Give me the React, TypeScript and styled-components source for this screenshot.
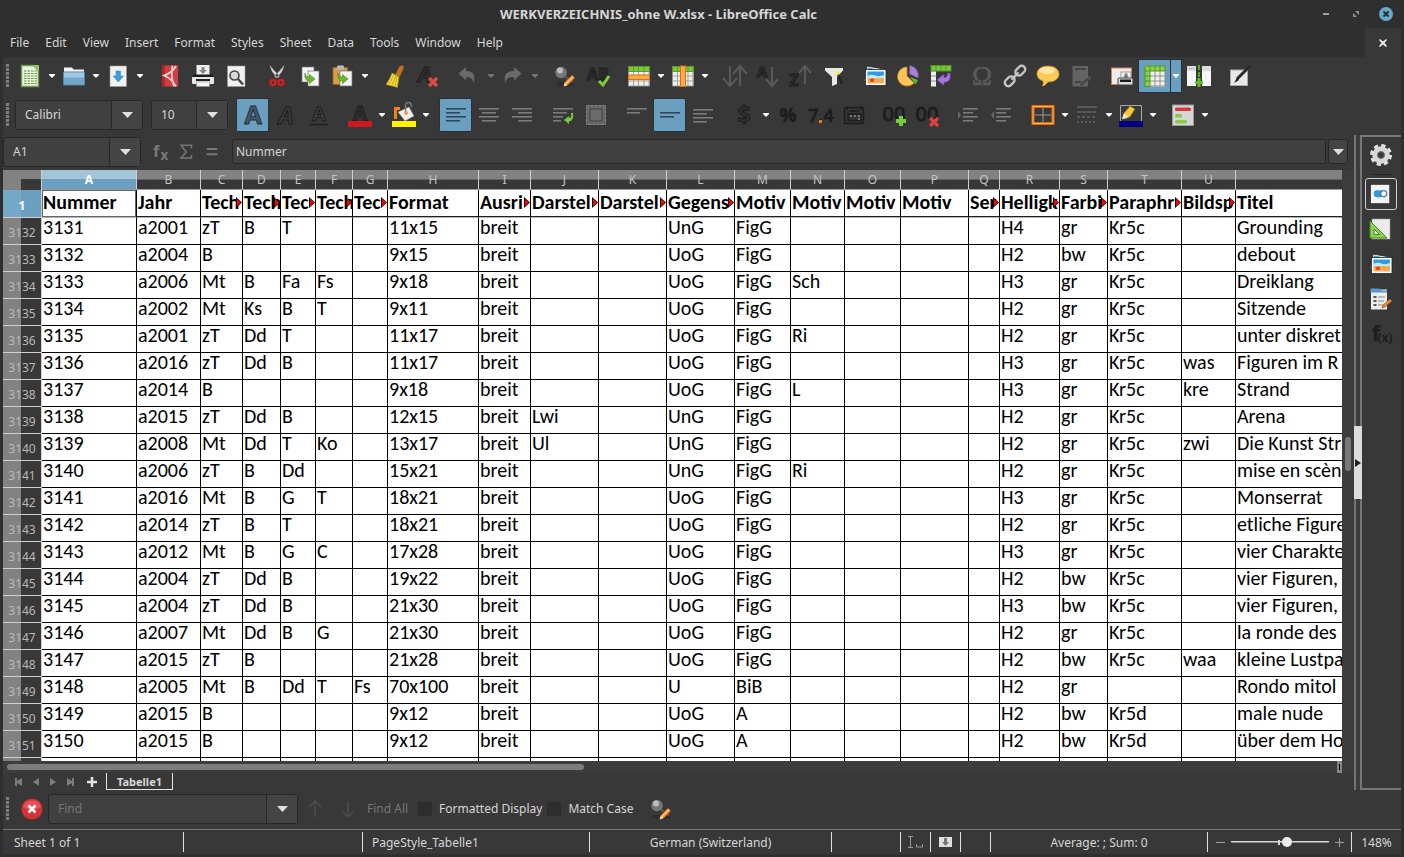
import React from 'react';
import styled, { createGlobalStyle, css } from 'styled-components';

const c = {
  frame: '#2f2f2f',
  panel: '#383838',
  field: '#404040',
  line: '#272727',
  text: '#d6d6d6',
  dim: '#767676',
  accent: '#6a9fc0',
};

const Global = createGlobalStyle`
  * { box-sizing: border-box; }
  body { margin: 0; background: ${c.frame}; overflow: hidden; }
  body, button, input { font-family: "Noto Sans", "Open Sans", sans-serif; font-size: 12px; color: ${c.text}; }
  button { border: 0; padding: 0; background: none; display: flex; align-items: center; justify-content: center; flex: none; }
  input { outline: none; }
  svg { display: block; flex: none; overflow: visible; }
`;

const Window = styled.div`
  display: flex;
  flex-direction: column;
  height: 100vh;
  padding: 0 3px 3px;
  background: ${c.frame};
`;

const TitleBar = styled.header`
  display: flex;
  align-items: center;
  height: 28px;
  flex: none;
`;
const Title = styled.h1`
  flex: 1;
  margin: 0;
  padding-left: 3px;
  font-size: 13px;
  font-weight: 700;
  line-height: 30px;
  text-align: center;
`;
const WindowButton = styled.button`
  width: 30px;
  height: 28px;
`;

const MenuBar = styled.nav`
  display: flex;
  align-items: center;
  height: 29px;
  flex: none;
  padding-left: 7px;
  gap: 16px;
`;
const MenuItem = styled.button`
  height: 29px;
`;
const CloseDocument = styled.button`
  width: 36px;
  height: 29px;
  margin-left: auto;
  background: ${c.panel};
`;

const Body = styled.div`
  display: flex;
  flex-direction: column;
  flex: 1;
  min-height: 0;
  background: ${c.panel};
`;

const Toolbar = styled.div`
  display: flex;
  align-items: center;
  height: 39px;
  flex: none;
  padding: 0 0 2px 3px;
`;
const Grip = styled.div`
  width: 3px;
  height: 23px;
  flex: none;
  background: repeating-linear-gradient(#7d7d7d 0 3px, transparent 3px 4px);
`;
const Gap = styled.div<{ $w?: number }>`
  width: ${p => p.$w ?? 8}px;
  flex: none;
`;
const ToolButton = styled.button<{ $on?: boolean }>`
  width: 33px;
  height: 34px;
  border-radius: 2px;
  border: 1px solid transparent;
  ${p => p.$on && css`background: ${c.accent}; border-color: #25323a;`}
`;
const ArrowButton = styled.button<{ $on?: boolean }>`
  width: 11px;
  height: 34px;
  ${p => p.$on && css`background: ${c.accent}; border: 1px solid #25323a; border-left: 0; border-radius: 0 2px 2px 0;`}
`;

const Combo = styled.div<{ $w: number }>`
  display: flex;
  width: ${p => p.$w}px;
  height: 30px;
  flex: none;
  background: ${c.field};
  border: 1px solid ${c.line};
  border-radius: 3px;
`;
const ComboInput = styled.input`
  flex: 1;
  min-width: 0;
  border: 0;
  background: none;
  padding: 0 0 0 9px;
  &::placeholder { color: ${c.dim}; opacity: 1; }
`;
const ComboArrow = styled.button`
  width: 31px;
  border-left: 1px solid ${c.line};
  background: #444444;
`;

const Middle = styled.div`
  display: flex;
  flex: 1;
  min-height: 0;
`;
const Work = styled.main`
  display: flex;
  flex-direction: column;
  flex: 1;
  min-width: 0;
`;
const FormulaBar = styled.div`
  display: flex;
  align-items: center;
  height: 35px;
  flex: none;
  padding: 0 6px 2px 0;
`;
const FormulaButton = styled.button`
  width: 25px;
  height: 26px;
`;
const FormulaInput = styled.input`
  flex: 1;
  min-width: 0;
  height: 25px;
  margin: 0 2px 0 8px;
  padding: 0 3px;
  background: #404040;
  border: 1px solid ${c.line};
  border-radius: 3px;
`;
const ExpandButton = styled.button`
  width: 20px;
  height: 25px;
  background: #444444;
  border: 1px solid ${c.line};
  border-radius: 3px;
`;

const SheetArea = styled.div`
  display: flex;
  flex: 1;
  min-height: 0;
`;
const SheetView = styled.div`
  flex: 1;
  min-width: 0;
  overflow: hidden;
  background: #ffffff;
`;
const Grid = styled.table`
  width: 100%;
  table-layout: fixed;
  border-collapse: separate;
  border-spacing: 0;
  font-family: Carlito, Lato, sans-serif;
  font-size: 20px;
  color: #000000;
`;
const Col = styled.col<{ $w?: number }>`
  width: ${p => (p.$w ? `${p.$w}px` : 'auto')};
`;
const ColHead = styled.th<{ $on?: boolean }>`
  height: 20px;
  padding: 0;
  border-right: 1px solid #d0d0d0;
  border-bottom: 1px solid #9a9a9a;
  background: ${p => (p.$on
    ? 'linear-gradient(#a4c4d7 0 9px, #6a9fc0 9px)'
    : 'linear-gradient(#828282 0 9px, #636363 9px 10px, #383838 10px)')};
  font: ${p => (p.$on ? 700 : 400)} 12px/19px "Noto Sans", sans-serif;
  color: ${p => (p.$on ? '#ffffff' : '#c4c4c4')};
  &:last-child { border-right: 0; }
`;
const Corner = styled.td`
  height: 20px;
  padding: 0;
  border-right: 1px solid #d0d0d0;
  background: linear-gradient(#828282 0 9px, transparent 9px), linear-gradient(90deg, #828282 0 18px, #383838 18px);
`;
const RowHead = styled.th<{ $on?: boolean }>`
  height: 27px;
  padding: 4px 0 0;
  border-right: 1px solid #d0d0d0;
  border-bottom: 1px solid #d0d0d0;
  background: ${p => (p.$on
    ? 'linear-gradient(90deg, #75a9c8 0 18px, #6a9fc0 18px)'
    : 'linear-gradient(90deg, #828282 0 18px, #383838 18px)')};
  font: ${p => (p.$on ? 700 : 400)} 12px/20px "Noto Sans", sans-serif;
  color: ${p => (p.$on ? '#ffffff' : '#b8b8b8')};
`;
const Cell = styled.td`
  height: 27px;
  padding: 0 0 8px 1px;
  white-space: nowrap;
  line-height: 18px;
  border-right: 1px solid #000000;
  border-bottom: 1px solid #000000;
  &:last-child { border-right: 0; }
`;
const FieldCell = styled(Cell)<{ $active?: boolean }>`
  position: relative;
  height: 28px;
  padding-bottom: 3px;
  overflow: hidden;
  line-height: 24px;
  font-weight: 700;
  border-bottom: 1px solid #b4b4b4;
  box-shadow: ${p => (p.$active ? 'inset 0 0 0 1px #666666' : 'inset 0 -1px #202020')};
`;
const Overflow = styled.svg`
  position: absolute;
  right: 0;
  top: 7px;
`;

const VScroll = styled.div`
  display: flex;
  flex-direction: column;
  align-items: center;
  width: 12px;
  flex: none;
  background: #3c3c3c;
`;
const VThumb = styled.div`
  width: 6px;
  height: 34px;
  border-radius: 3px;
  background: #787878;
`;
const Spacer = styled.div<{ $grow: number }>`
  flex: ${p => p.$grow} 1 0;
`;
const HScroll = styled.div`
  display: flex;
  align-items: center;
  height: 12px;
  flex: none;
  padding: 0 12px 0 4px;
  background: #3c3c3c;
`;
const HThumb = styled.div`
  flex: 577 1 0;
  height: 6px;
  border-radius: 3px;
  background: #7c7c7c;
`;
const SplitBox = styled.div`
  width: 5px;
  height: 12px;
  border: solid #858585;
  border-width: 3px 2px;
  background: #000000;
`;
const Tabs = styled.div`
  display: flex;
  height: 17px;
  flex: none;
  padding-left: 7px;
`;
const TabArrow = styled.button`
  width: 17px;
  height: 17px;
`;
const AddTab = styled(TabArrow)`
  width: 28px;
`;
const Tab = styled.button`
  height: 17px;
  padding: 0 10px;
  border: solid #e4e4e4;
  border-width: 0 1px 1px;
  font-size: 11px;
  font-weight: 700;
`;

const Divider = styled.div`
  display: flex;
  flex-direction: column;
  align-items: center;
  width: 8px;
  flex: none;
  background: linear-gradient(90deg, #757575 0 2px, #3c3c3c 2px 6px, #757575 6px 8px);
`;
const DividerHandle = styled.button`
  width: 8px;
  height: 73px;
  background: #dcdcdc;
`;
const Sidebar = styled.aside`
  display: flex;
  flex-direction: column;
  align-items: center;
  width: 39px;
  flex: none;
  padding: 2px 2px 0 0;
  border-top: 2px solid #757575;
  border-bottom: 2px solid #757575;
`;
const SideButton = styled.button<{ $on?: boolean }>`
  width: 32px;
  height: 32px;
  margin-bottom: 3px;
  border: 1px solid ${p => (p.$on ? '#cfcfcf' : 'transparent')};
  border-radius: 3px;
`;
const SideRule = styled.div`
  width: 22px;
  height: 1px;
  margin-bottom: 3px;
  background: #272727;
`;

const FindBar = styled.form`
  display: flex;
  align-items: center;
  height: 39px;
  flex: none;
  padding: 0 0 2px 3px;
`;
const FindAll = styled.button`
  margin: 0 10px 0 3px;
  color: ${c.dim};
`;
const Check = styled.label`
  display: flex;
  align-items: center;
  gap: 7px;
  margin-right: 5px;
`;
const Box = styled.input`
  appearance: none;
  width: 14px;
  height: 14px;
  margin: 0;
  background: #2e2e2f;
  border: 1px solid #2a2a30;
  border-radius: 2px;
`;

const StatusBar = styled.footer`
  display: flex;
  align-items: center;
  height: 25px;
  flex: none;
  border-top: 1px solid #757575;
`;
const Status = styled.div<{ $grow?: number; $w?: number; $align?: string; $indent?: number }>`
  display: flex;
  align-items: center;
  justify-content: ${p => p.$align ?? 'center'};
  flex: ${p => (p.$w ? `0 0 ${p.$w}px` : `${p.$grow} 1 0`)};
  height: 20px;
  text-indent: ${p => p.$indent ?? 0}px;
  white-space: nowrap;
  border-right: 1px solid #e0e0e0;
  &:last-child { border: 0; }
`;
const ZoomButton = styled.button`
  width: 19px;
  height: 20px;
`;
const ZoomSlider = styled.input`
  appearance: none;
  width: 98px;
  height: 12px;
  margin: 0 1px;
  background: linear-gradient(#d8d8d8, #d8d8d8) 47px 50% / 2px 5px no-repeat,
    linear-gradient(#d8d8d8 0 1px, #888888 1px) 0 50% / 100% 2px no-repeat;
  &::-webkit-slider-thumb {
    appearance: none;
    width: 10px;
    height: 10px;
    border-radius: 50%;
    background: #ececec;
  }
`;

const Svg = ({ children, s = 24 }: { children: React.ReactNode; s?: number }) => (
  <svg width={s} height={s} viewBox="0 0 24 24" aria-hidden="true">{children}</svg>
);

const DownSmall = ({ dim }: { dim?: boolean }) => (
  <svg width="6" height="4" viewBox="0 0 6 4" aria-hidden="true"><path d="M0 0h6v1L3 4 0 1z" fill={dim ? '#777' : '#fff'} /></svg>
);
const DownLarge = () => (
  <svg width="11" height="6" viewBox="0 0 11 6" aria-hidden="true"><path d="M0 0h11L5.500 6z" fill="#e0e0e0" /></svg>
);
const CutMarker = () => (
  <Overflow width="6" height="11" viewBox="0 0 6 11" aria-hidden="true">
    <path d="M0 0v11l6-5.500z" fill="#000" />
    <path d="M1 1.800v7.400l4.200-3.700z" fill="#ff0000" />
  </Overflow>
);

const pageLines = (xs: number[][], color: string, top = 5) =>
  xs.map(([x, w], i) => <rect key={i} x={x} y={top + i * 4} width={w} height="1.600" fill={color} />);

const letter = (t: string, size: number, x = 12, y = 19, extra = {}) => (
  <text x={x} y={y} textAnchor="middle" fontFamily="Open Sans" fontWeight="700" fontSize={size} fill="#303030" stroke="#1d1d1d" strokeWidth="1" {...extra}>{t}</text>
);

const magnifier = (
  <>
    <ellipse cx="12" cy="20" rx="9" ry="2.500" fill="#2c2c2c" />
    <path d="M11 12l9 6" stroke="#555" strokeWidth="2.500" />
    <circle cx="8" cy="8.500" r="5.800" fill="#777" />
    <circle cx="7" cy="6.500" r="3" fill="#bdbdbd" />
    <path d="M11 22l1-4 7-7 3 3-7 7z" fill="#f08a24" stroke="#8a4a10" strokeWidth=".6" />
    <path d="M13 19.500l7-7" stroke="#ffd08a" strokeWidth="1.200" />
    <path d="M10.500 22.500l1.300-4 2.700 2.700z" fill="#f4dcb8" />
  </>
);

const photo = (
  <>
    <path d="M4 2l17 3v14L1 17z" fill="#f4f4f4" stroke="#1d1d1d" strokeWidth=".8" />
    <path d="M5 3.500l13 2.500-14 1z" fill="#3aa0dc" />
    <rect x="2.500" y="5.500" width="20.500" height="16" fill="#fff" stroke="#222" strokeWidth=".8" />
    <rect x="4.500" y="7.500" width="16.500" height="6" fill="#2f9de0" />
    <path d="M4.500 12q4-2 8-.5t8.500-.5v3H4.500z" fill="#c8e8fa" />
    <rect x="4.500" y="14" width="16.500" height="5.500" fill="#f5ab50" />
    <path d="M9 14l1 1.300h1.800l-1.200 1.200.4 1.800-2-.9-2 .9.400-1.800L6.200 15.300H8z" fill="#d8401c" />
  </>
);

const tableIcon = (
  <>
    <rect x="1.500" y="2" width="21" height="20" fill="#f0f0ea" />
    <path d="M1.500 12h21M1.500 17h21M6.500 2v20M11.500 2v20M17 2v20M22 2v20M1.500 22h21" stroke="#999" strokeWidth=".9" />
    <path d="M1.500 2.500h21v5h-21z" fill="#7cc53c" stroke="#4a9a1c" strokeWidth=".9" />
    <path d="M6.500 2.500v5M11.500 2.500v5M17 2.500v5" stroke="#4a9a1c" strokeWidth=".8" />
  </>
);

const alignColor = '#7b7b7b';
const thin = { fontFamily: 'Noto Sans', fontWeight: 400, fill: '#1d1d1d' };

const icons: Record<string, React.ReactNode> = {
  new: (
    <>
      <path d="M3.500 1.500h12l5 5v16h-17z" fill="#e9f3df" stroke="#6d9a4a" strokeWidth="1.400" />
      <path d="M15 1h6v6z" fill="#9cc46e" />
      <path d="M6 7h13M6 9.500h13M6 12h13M6 14.500h13M6 17h13M6 19.500h13" stroke="#659e3c" strokeWidth="1.200" strokeDasharray="2.500 1" />
    </>
  ),
  open: (
    <>
      <path d="M2 3.500h8l1.500 2H22V20H2z" fill="#f4f4f4" />
      <path d="M1.500 8h21v13h-21z" fill="#73a7cc" stroke="#4d86ad" />
      <path d="M2 8.500h20v5H2z" fill="#a3c8e2" />
    </>
  ),
  save: (
    <>
      <rect x="4" y="2" width="16.500" height="20.500" fill="#f1f1f1" stroke="#999" strokeWidth=".6" />
      <path d="M10 7h4.500v5h3l-5.200 6L7 12h3z" fill="#3b9ddd" stroke="#2f83bd" strokeWidth=".5" />
    </>
  ),
  pdf: (
    <>
      <path d="M4 1.500h16v21H4z" fill="#cf4040" />
      <path d="M4 1.500h3v21H4z" fill="#b52828" />
      <path d="M18 2Q14 9 6 11.500q8 3 12 11" fill="none" stroke="#f6dede" strokeWidth="1.600" />
      <path d="M14.500 1.500q-2 10 1.500 21" fill="none" stroke="#f0c4c4" strokeWidth="1.800" />
    </>
  ),
  print: (
    <>
      <rect x="5.500" y="1" width="13" height="11" fill="#eee" />
      <path d="M10.500 3h3v3h2.500l-4 4-4-4h2.500z" fill="#888" />
      <rect x="2" y="10.500" width="20" height="5" rx="1" fill="#1c1c1c" />
      <rect x="1" y="13" width="22" height="7" rx="1" fill="#e6e6e6" />
      <path d="M5 15h14v2H5z" fill="#222" />
      <rect x="5.500" y="18" width="13" height="4.500" fill="#f6f6f6" stroke="#888" strokeWidth=".5" />
    </>
  ),
  preview: (
    <>
      <rect x="3.500" y="2" width="17.500" height="20.500" fill="#f1f1f1" stroke="#999" strokeWidth=".6" />
      <circle cx="10.500" cy="11.500" r="4.500" fill="#d5d9dc" stroke="#444" strokeWidth="1.600" />
      <path d="M14 15l5 5.500" stroke="#444" strokeWidth="2.500" />
    </>
  ),
  cut: (
    <>
      <path d="M5 1.500q1 7 8 12.500l1.500-2Q9 7 5 1.500zM19 1.500q-1 7-8 12.500l-1.500-2Q15 7 19 1.500z" fill="#e2e2e2" stroke="#888" strokeWidth=".5" />
      <circle cx="8" cy="18.500" r="2.600" fill="none" stroke="#d81e1e" strokeWidth="2.200" />
      <circle cx="16" cy="18.500" r="2.600" fill="none" stroke="#d81e1e" strokeWidth="2.200" />
    </>
  ),
  copy: (
    <>
      <rect x="4" y="3" width="12" height="15" fill="#f4f4f4" stroke="#777" strokeWidth=".7" />
      <rect x="10" y="7" width="11" height="15" fill="#f4f4f4" stroke="#777" strokeWidth=".7" />
      <path d="M7 9q0 4 4.500 4v-2.500l5.500 4.500-5.500 4.500V17Q6 17 7 9z" fill="#6bb828" stroke="#418314" strokeWidth=".6" />
    </>
  ),
  paste: (
    <>
      <rect x="2" y="3.500" width="14.500" height="17" fill="#d89c48" stroke="#93601e" strokeWidth=".8" />
      <rect x="6" y="1.500" width="7" height="4" rx="1" fill="#b9b9b9" />
      <rect x="9" y="7" width="12" height="15" fill="#f4f4f4" stroke="#777" strokeWidth=".7" />
      <path d="M7 9q0 4 4.500 4v-2.500l5.500 4.500-5.500 4.500V17Q6 17 7 9z" fill="#6bb828" stroke="#418314" strokeWidth=".6" />
    </>
  ),
  brush: (
    <>
      <path d="M12 11l4-8q1.500-2 3.500-1.500t1 3.500l-4 8z" fill="#b9752a" stroke="#7a4812" strokeWidth=".6" />
      <path d="M9 9l7 4-1.500 10.500-11.500-3Q7 15 9 9z" fill="#f2dc3c" stroke="#9b8416" strokeWidth=".7" />
      <path d="M6 20l5-9M9 21l4-9M12 22l2-9" stroke="#b39b1c" strokeWidth=".8" />
    </>
  ),
  clear: (
    <>
      {letter('A', 22, 9, 18, { fontStyle: 'italic' })}
      <path d="M13 14l8 8M21 14l-8 8" stroke="#e04848" strokeWidth="3.200" />
    </>
  ),
  undo: <path d="M1.500 9.500L9 3v4q11 0 7.500 12-1-6.500-7.500-6v3.500z" fill="#6a6a6a" />,
  redo: <path d="M20.500 9.500L13 3v4Q1 7 4.500 19q1-6.500 8.500-6v3.500z" fill="#6a6a6a" />,
  find: magnifier,
  spell: (
    <>
      {letter('AB', 16, 12, 16)}
      <path d="M13 17l4 4 6-9" fill="none" stroke="#7ccc34" strokeWidth="3" />
    </>
  ),
  row: <>{tableIcon}<rect x="1.500" y="11" width="21" height="4.500" fill="#fbab48" stroke="#e0700c" /></>,
  column: <>{tableIcon}<rect x="9.500" y="2" width="5" height="20.500" fill="#fbab48" stroke="#e0700c" /></>,
  sort: <path d="M7 2v19M0 14l7 8 7-8M17 22V3M10 10l7-8 7 8" fill="none" stroke="#5a5a5a" strokeWidth="2" />,
  sortAsc: <>{letter('A', 15, 6, 13)}<path d="M16 3v19M10 15l6 7 6-7" fill="none" stroke="#5a5a5a" strokeWidth="2" /></>,
  sortDesc: <>{letter('Z', 16, 5, 22)}<path d="M16 20V2M10 9l6-7 6 7" fill="none" stroke="#5a5a5a" strokeWidth="2" /></>,
  filter: (
    <>
      <path d="M3 4h18v2.500l-6 6.500v7l-5 2v-9L3 6.500z" fill="#e8e8e4" />
      <path d="M15 8l5 12" stroke="#222" strokeWidth="2" />
      <path d="M15 6l1 2 2 0-1.500 1.500.5 2-2-1-2 1 .5-2L12 8h2z" fill="#f6ee70" />
    </>
  ),
  photo,
  chart: (
    <>
      <path d="M11 12V3a9.500 9.500 0 1 0 7 16z" fill="#f9c45a" stroke="#d88a1c" strokeWidth=".7" />
      <path d="M13.500 10V1.500A10 10 0 0 1 22 14z" fill="#a684d4" stroke="#6c48a0" strokeWidth=".7" />
      <path d="M14 13l8 3-2.500 4.500z" fill="#5fb32c" />
    </>
  ),
  pivot: (
    <>
      <rect x="2" y="1.500" width="20" height="5.500" fill="#7cc53c" stroke="#4a9a1c" />
      <path d="M7 1.500V7M12 1.500V7M17 1.500V7" stroke="#4a9a1c" />
      <rect x="2" y="7.500" width="5" height="15" fill="#eee" />
      <path d="M2 12h5M2 17h5" stroke="#888" />
      <path d="M21 9q2 9-6 9.500v3L8 16l7-6v3.500q4 0 3.500-4.500z" fill="#a478d4" stroke="#7040a8" strokeWidth=".6" />
    </>
  ),
  omega: letter('Ω', 27, 12, 21, { fontFamily: 'Liberation Serif', fontWeight: 400, fill: '#5a5a5a', stroke: '#5a5a5a', strokeWidth: 0.6 }),
  link: (
    <g transform="rotate(-45 12 12)" fill="none" stroke="#c4c4c4" strokeWidth="2.400">
      <rect x="-1" y="8.500" width="11" height="7" rx="3.500" />
      <rect x="14" y="8.500" width="11" height="7" rx="3.500" />
      <path d="M7 12h10" />
    </g>
  ),
  comment: (
    <>
      <path d="M12 2c6.500 0 11 3.500 11 8s-4.500 8-11 8q-3 4-6 4 2-2 1-5-6-2-6-7c0-4.500 4.500-8 11-8z" fill="#f9cb56" stroke="#d5952a" strokeWidth=".6" />
      <ellipse cx="11" cy="6.500" rx="8" ry="3.500" fill="#fde6a4" />
    </>
  ),
  headfoot: (
    <>
      <rect x="3.500" y="2" width="15.500" height="20.500" fill="#636363" />
      <path d="M6 5h11M6 18h7" stroke="#3a3a3a" strokeWidth="1.600" />
      <path d="M10 21l10-9 2 2-9 8z" fill="#444" stroke="#777" strokeWidth=".5" />
    </>
  ),
  printArea: (
    <>
      <rect x="1.500" y="4" width="20" height="16.500" fill="#ececec" stroke="#d4824a" />
      <rect x="11" y="8" width="10" height="7" fill="#f6f6f6" stroke="#777" strokeWidth=".7" />
      <path d="M14.500 9.500h3V12h1.500L16 14.500 13 12h1.500z" fill="#777" />
      <rect x="8" y="14" width="15" height="7" rx="1" fill="#ddd" stroke="#444" />
      <path d="M10 15.500h11V18H10z" fill="#181818" />
    </>
  ),
  freeze: (
    <>
      <rect x="2" y="2" width="20" height="20.500" fill="#f0f0ea" />
      <path d="M7 12h15M7 17h15M12 7v15M17 7v15M22 2v20M2 22h20" stroke="#8a8a8a" strokeWidth=".9" />
      <path d="M2 2h20v5H7v15.500H2z" fill="#8ed04a" stroke="#4a9a1c" />
      <path d="M7 2v5H2M12 2v5M17 2v5M2 12h5M2 17h5" fill="none" stroke="#4a9a1c" />
    </>
  ),
  split: (
    <>
      <path d="M0 2h9v20H0zM15 2h9v20h-9z" fill="#f6f6f6" />
      <path d="M0 2h9v5H0zM15 2h9v5h-9z" fill="#dcdcdc" />
      <path d="M2 4.500h5" stroke="#999" strokeDasharray="1 1" />
      <path d="M12 1v13" stroke="#54ac1c" strokeWidth="2" strokeDasharray="5 2" />
      <path d="M12 14v9M8 18.500h8" stroke="#62bc28" strokeWidth="3" />
    </>
  ),
  draw: (
    <>
      <rect x="2.500" y="6" width="17" height="15.500" fill="#e8e8e8" stroke="#aaa" />
      <path d="M22 2L9 15" stroke="#292929" strokeWidth="3" />
      <path d="M9 14l-3 5 5-3" fill="#111" />
    </>
  ),
  bold: letter('A', 25, 12, 21, { fill: '#455a68', stroke: '#24313a' }),
  italic: letter('A', 24, 12, 21, { fontStyle: 'italic', fill: '#3a3a3a' }),
  underline: <>{letter('A', 20, 12, 18, { fill: '#3f3f3f' })}<path d="M3 21.500h18" stroke="#1d1d1d" strokeWidth="1.500" /></>,
  fontColor: <>{letter('A', 21, 12, 18)}<path d="M0 18h24v6H0z" fill="#cf1820" /></>,
  highlight: (
    <>
      <path d="M3.500 16V5.500H8" fill="none" stroke="#f08020" strokeWidth="3" />
      <path d="M6 9l11-5 5 9-9 5z" fill="#f0f0f0" stroke="#888" strokeWidth=".6" />
      <path d="M13.500 9V3q0-3.500 3-3.500t3 4.500" fill="none" stroke="#777" strokeWidth="1.500" />
      <circle cx="14" cy="10" r="2" fill="#e8a040" />
      <path d="M0 18h24v6H0z" fill="#fff200" />
    </>
  ),
  alignLeft: pageLines([[2, 20], [2, 14], [2, 20], [2, 14]], '#31485a'),
  alignCenter: pageLines([[2, 20], [5, 14], [2, 20], [5, 14]], alignColor),
  alignRight: pageLines([[2, 20], [8, 14], [2, 20], [8, 14]], alignColor),
  wrap: (
    <>
      {pageLines([[2, 20], [2, 14], [2, 10], [2, 8]], alignColor)}
      <path d="M22 10q1 8-4 8.500V21l-5-4 5-4v2q3 0 2-5z" fill="#78c838" />
    </>
  ),
  merge: (
    <>
      <rect x="2.500" y="2.500" width="19" height="19" fill="#666" stroke="#858585" strokeDasharray="3 1" />
      <rect x="6" y="6" width="12" height="12" fill="#6c6c6c" stroke="#444" />
    </>
  ),
  top: pageLines([[2, 20], [2, 13]], alignColor, 5),
  middle: pageLines([[2, 20], [2, 14]], '#31485a', 9),
  bottom: pageLines([[2, 20], [2, 14], [2, 20], [2, 14]], alignColor, 6),
  currency: letter('$', 23, 12, 20),
  percent: letter('%', 19, 12, 19, { strokeWidth: 0.5, fill: '#1d1d1d' }),
  number: <>{letter('7.4', 18, 12, 19, { ...thin, fontWeight: 600, strokeWidth: 0.5 })}<rect x="10" y="17" width="3" height="3" fill="#f07c10" /></>,
  date: (
    <>
      <rect x="2.500" y="4.500" width="19" height="16" rx="1" fill="#343434" stroke="#1d1d1d" strokeWidth="1.500" />
      <path d="M5 3v4M19 3v4M7 8h10M6 17.500h13V11H6z" fill="none" stroke="#1d1d1d" strokeWidth="1.400" />
      <path d="M8 13h2M12 13h2M16 13h2M16 16h2" stroke="#777" strokeWidth="1.800" />
    </>
  ),
  addDecimal: <>{letter('00', 20, 11, 18, thin)}<path d="M18 13v10M13 18h10" stroke="#78cc38" strokeWidth="4" /></>,
  delDecimal: <>{letter('00', 20, 11, 18, thin)}<path d="M14 15l8 8M22 15l-8 8" stroke="#e04040" strokeWidth="3.200" /></>,
  indent: <><path d="M1 8l3 4-3 4z" fill="#666" />{pageLines([[6, 15], [6, 10], [6, 15], [6, 10]], alignColor)}</>,
  outdent: <><path d="M4 8l-3 4 3 4z" fill="#666" />{pageLines([[6, 15], [6, 10], [6, 15], [6, 10]], alignColor)}</>,
  border: (
    <>
      <path d="M12 4v16M4 12h16" stroke="#999" />
      <rect x="2" y="3.500" width="20" height="17" fill="none" stroke="#e06c08" strokeWidth="3" />
      <rect x="2" y="3.500" width="20" height="17" fill="none" stroke="#ffae50" />
    </>
  ),
  borderStyle: (
    <>
      <path d="M2 4h20" stroke="#666" strokeWidth="1.500" />
      <path d="M2 9h20" stroke="#666" strokeWidth="1.500" strokeDasharray="4 1" />
      <path d="M2 14h20" stroke="#666" strokeWidth="1.500" strokeDasharray="3 2" />
      <path d="M2 19h20" stroke="#666" strokeWidth="1.500" strokeDasharray="2 2" />
    </>
  ),
  borderColor: (
    <>
      <path d="M1.500 18V2.500h21V18" fill="none" stroke="#aaa" />
      <path d="M3 16l2-6 6-7 5 3-5 8-5 2z" fill="#f2c838" stroke="#8a6a10" strokeWidth=".7" />
      <path d="M3 16l2-6 4 4z" fill="#ececec" />
      <path d="M0 18h24v6H0z" fill="#000080" />
    </>
  ),
  conditional: (
    <>
      <rect x="1.500" y="2" width="21" height="20.500" fill="#d6d6d6" stroke="#999" />
      <rect x="4" y="4.500" width="16" height="3.500" rx="1.500" fill="#d83838" />
      <rect x="4" y="11" width="7" height="3.500" rx="1.500" fill="#86cc48" />
      <rect x="4" y="17" width="12" height="3.500" rx="1.500" fill="#86cc48" />
    </>
  ),
  gear: (
    <>
      <circle cx="12" cy="12" r="9" fill="none" stroke="#e2e2e2" strokeWidth="4" strokeDasharray="4 3.068" />
      <circle cx="12" cy="12" r="6" fill="none" stroke="#d8d8d8" strokeWidth="5.500" />
      <circle cx="12" cy="12" r="3.500" fill="#383838" stroke="#777" />
    </>
  ),
  properties: (
    <>
      <rect x="1" y="2" width="20" height="20" fill="#f4f4f4" />
      <rect x="4" y="8" width="15" height="7.500" rx="3.700" fill="#3a94d8" />
      <circle cx="15" cy="11.700" r="3.200" fill="#fff" stroke="#3a6a90" />
    </>
  ),
  styles: (
    <>
      <rect x="3" y="2" width="18" height="20" fill="#ececec" stroke="#999" strokeWidth=".6" />
      <path d="M1 4v17h17zM5 12v5.500h5.500z" fill="#8fd05a" fillRule="evenodd" stroke="#3f8c14" />
    </>
  ),
  navigator: (
    <>
      <rect x="2" y="2.500" width="16" height="20" fill="#ececec" />
      <path d="M1.500 1.500h9l2 2h5.500v2h-16.500z" fill="#5b93cc" />
      <path d="M4.500 10h3M4.500 14h3M4.500 18h3" stroke="#555" strokeWidth="2" />
      <path d="M9 10h7M9 14h6M9 18h5" stroke="#888" strokeWidth="1.200" />
      <path d="M13 21l1-3 7-6 2 2-7 6z" fill="#f08a24" stroke="#8a4a10" strokeWidth=".6" />
    </>
  ),
  functions: (
    <>
      {letter('f', 22, 7, 19, { fontFamily: 'Noto Sans', fill: '#1d1d1d', strokeWidth: 0 })}
      {letter('(x)', 12, 16, 20, { fontFamily: 'Noto Sans', fill: '#1d1d1d', strokeWidth: 0 })}
    </>
  ),
};

type Tool = [string, string, ('arrow' | 'dim' | 'on' | 'on-arrow')?];
const standard: Tool[][] = [
  [['new', 'New', 'arrow'], ['open', 'Open', 'arrow'], ['save', 'Save', 'arrow']],
  [['pdf', 'Export as PDF'], ['print', 'Print'], ['preview', 'Print Preview']],
  [['cut', 'Cut'], ['copy', 'Copy'], ['paste', 'Paste', 'arrow']],
  [['brush', 'Clone Formatting'], ['clear', 'Clear Formatting']],
  [['undo', 'Undo', 'dim'], ['redo', 'Redo', 'dim']],
  [['find', 'Find and Replace'], ['spell', 'Spelling']],
  [['row', 'Row', 'arrow'], ['column', 'Column', 'arrow']],
  [['sort', 'Sort'], ['sortAsc', 'Sort Ascending'], ['sortDesc', 'Sort Descending'], ['filter', 'AutoFilter']],
  [['photo', 'Insert Image'], ['chart', 'Insert Chart'], ['pivot', 'Pivot Table']],
  [['omega', 'Special Character'], ['link', 'Hyperlink'], ['comment', 'Comment'], ['headfoot', 'Headers and Footers']],
  [['printArea', 'Print Area'], ['freeze', 'Freeze', 'on-arrow'], ['split', 'Split Window']],
  [['draw', 'Draw Functions']],
];
const formatting: Tool[][] = [
  [['bold', 'Bold', 'on'], ['italic', 'Italic'], ['underline', 'Underline']],
  [['fontColor', 'Font Color', 'arrow'], ['highlight', 'Background Color', 'arrow']],
  [['alignLeft', 'Align Left', 'on'], ['alignCenter', 'Center'], ['alignRight', 'Align Right']],
  [['wrap', 'Wrap Text'], ['merge', 'Merge Cells']],
  [['top', 'Align Top'], ['middle', 'Center Vertically', 'on'], ['bottom', 'Align Bottom']],
  [['currency', 'Currency', 'arrow'], ['percent', 'Percent'], ['number', 'Number'], ['date', 'Date']],
  [['addDecimal', 'Add Decimal Place'], ['delDecimal', 'Delete Decimal Place']],
  [['indent', 'Increase Indent'], ['outdent', 'Decrease Indent']],
  [['border', 'Borders', 'arrow'], ['borderStyle', 'Border Style', 'arrow'], ['borderColor', 'Border Color', 'arrow']],
  [['conditional', 'Conditional', 'arrow']],
];

const ToolGroups = ({ groups }: { groups: Tool[][] }) => (
  <>
    {groups.map((group, g) => (
      <React.Fragment key={g}>
        {g > 0 && <Gap />}
        {group.map(([id, label, kind]) => (
          <React.Fragment key={id}>
            <ToolButton aria-label={label} $on={kind === 'on' || kind === 'on-arrow'}><Svg>{icons[id]}</Svg></ToolButton>
            {kind && kind !== 'on' && (
              <ArrowButton aria-label={`${label} options`} $on={kind === 'on-arrow'}><DownSmall dim={kind === 'dim'} /></ArrowButton>
            )}
          </React.Fragment>
        ))}
      </React.Fragment>
    ))}
  </>
);

const letters = 'ABCDEFGHIJKLMNOPQRSTU'.split('');
const widths = [95, 64, 42, 38, 35, 37, 35, 91, 52, 68, 68, 68, 56, 54, 56, 68, 31, 60, 48, 74, 54];
const fields = ['Nummer', 'Jahr', 'Tech', 'Tech', 'Tec', 'Tech', 'Tec', 'Format', 'Ausri', 'Darstel', 'Darstel',
  'Gegens', 'Motiv', 'Motiv', 'Motiv', 'Motiv', 'Ser', 'Helligk', 'Farbi', 'Paraphr', 'Bildsp', 'Titel'];
const cut = [2, 3, 4, 5, 6, 8, 9, 10, 11, 16, 17, 18, 19, 20];

/* number|year|techniques C-G|format|J|subject|motif M|motif N|brightness|colour|paraphrase|U|title */
const records = `3131|a2001|zT,B,T|11x15||UnG|FigG||H4|gr|Kr5c||Grounding
3132|a2004|B|9x15||UoG|FigG||H2|bw|Kr5c||debout
3133|a2006|Mt,B,Fa,Fs|9x18||UoG|FigG|Sch|H3|gr|Kr5c||Dreiklang
3134|a2002|Mt,Ks,B,T|9x11||UoG|FigG||H2|gr|Kr5c||Sitzende
3135|a2001|zT,Dd,T|11x17||UoG|FigG|Ri|H2|gr|Kr5c||unter diskret
3136|a2016|zT,Dd,B|11x17||UoG|FigG||H3|gr|Kr5c|was|Figuren im R
3137|a2014|B|9x18||UoG|FigG|L|H3|gr|Kr5c|kre|Strand
3138|a2015|zT,Dd,B|12x15|Lwi|UnG|FigG||H2|gr|Kr5c||Arena
3139|a2008|Mt,Dd,T,Ko|13x17|Ul|UnG|FigG||H2|gr|Kr5c|zwi|Die Kunst Str
3140|a2006|zT,B,Dd|15x21||UnG|FigG|Ri|H2|gr|Kr5c||mise en scèn
3141|a2016|Mt,B,G,T|18x21||UoG|FigG||H3|gr|Kr5c||Monserrat
3142|a2014|zT,B,T|18x21||UoG|FigG||H2|gr|Kr5c||etliche Figure
3143|a2012|Mt,B,G,C|17x28||UoG|FigG||H3|gr|Kr5c||vier Charakte
3144|a2004|zT,Dd,B|19x22||UoG|FigG||H2|bw|Kr5c||vier Figuren,
3145|a2004|zT,Dd,B|21x30||UoG|FigG||H3|bw|Kr5c||vier Figuren,
3146|a2007|Mt,Dd,B,G|21x30||UoG|FigG||H2|gr|Kr5c||la ronde des
3147|a2015|zT,B|21x28||UoG|FigG||H2|bw|Kr5c|waa|kleine Lustpa
3148|a2005|Mt,B,Dd,T,Fs|70x100||U|BiB||H2|gr|||Rondo mitol
3149|a2015|B|9x12||UoG|A||H2|bw|Kr5d||male nude
3150|a2015|B|9x12||UoG|A||H2|bw|Kr5d||über dem Ho
`.trim().split('\n').map(line => {
  const [num, year, tech, format, j, l, m, n, r, s, t, u, title] = line.split('|');
  const techs = [...tech.split(','), '', '', '', ''].slice(0, 5);
  return [num, year, ...techs, format, 'breit', j, '', l, m, n, '', '', '', r, s, t, u, title];
});

const menus = ['File', 'Edit', 'View', 'Insert', 'Format', 'Styles', 'Sheet', 'Data', 'Tools', 'Window', 'Help'];

const Small = ({ d, fill = '#7d7d7d', w = 8 }: { d: string; fill?: string; w?: number }) => (
  <svg width={w} height={w} viewBox="0 0 8 8" aria-hidden="true"><path d={d} fill={fill} /></svg>
);

export default function App() {
  return (
    <Window>
      <Global />
      <TitleBar>
        <Title>WERKVERZEICHNIS_ohne W.xlsx - LibreOffice Calc</Title>
        <WindowButton aria-label="Minimize"><Small d="M1 3h6v2H1z" fill="#a0a0a0" /></WindowButton>
        <WindowButton aria-label="Restore"><Small d="M3 1h4v4zM1 3v4h4z" fill="#909090" /></WindowButton>
        <WindowButton aria-label="Close">
          <svg width="14" height="14" viewBox="0 0 14 14"><circle cx="7" cy="7" r="7" fill="#68a6ca" /><path d="M4.500 4.500l5 5M9.500 4.500l-5 5" stroke="#26323a" strokeWidth="2" /></svg>
        </WindowButton>
      </TitleBar>
      <MenuBar>
        {menus.map(m => <MenuItem key={m}>{m}</MenuItem>)}
        <CloseDocument aria-label="Close document">
          <Small d="M1 0l3 2.500L7 0l1 1-2.500 3L8 7 7 8 4 5.500 1 8 0 7l2.500-3L0 1z" fill="#e8e8e8" />
        </CloseDocument>
      </MenuBar>
      <Body>
        <Toolbar role="toolbar" aria-label="Standard">
          <Grip /><Gap $w={4} />
          <ToolGroups groups={standard} />
        </Toolbar>
        <Toolbar role="toolbar" aria-label="Formatting">
          <Grip /><Gap $w={6} />
          <Combo $w={128}>
            <ComboInput aria-label="Font name" defaultValue="Calibri" />
            <ComboArrow aria-label="Font list"><DownLarge /></ComboArrow>
          </Combo>
          <Gap />
          <Combo $w={77}>
            <ComboInput aria-label="Font size" defaultValue="10" />
            <ComboArrow aria-label="Size list"><DownLarge /></ComboArrow>
          </Combo>
          <Gap />
          <ToolGroups groups={formatting} />
        </Toolbar>
        <Middle>
          <Work>
            <FormulaBar>
              <Combo $w={138}>
                <ComboInput aria-label="Name box" defaultValue="A1" />
                <ComboArrow aria-label="Named ranges"><DownLarge /></ComboArrow>
              </Combo>
              <Gap />
              <FormulaButton aria-label="Function wizard"><Svg s={18}><text x="0" y="18" fontSize="22" fontFamily="Noto Sans" fontWeight="700" fill="#777">f</text><text x="10" y="22" fontSize="18" fontFamily="Noto Sans" fontWeight="700" fill="#777">x</text></Svg></FormulaButton>
              <FormulaButton aria-label="Sum"><Svg s={18}><path d="M18 7V3H4l7 9-7 8h14v-4" fill="none" stroke="#777" strokeWidth="2" /></Svg></FormulaButton>
              <FormulaButton aria-label="Formula"><Svg s={18}><path d="M5 8h14M5 15h14" stroke="#777" strokeWidth="2.500" /></Svg></FormulaButton>
              <FormulaInput aria-label="Formula input" defaultValue="Nummer" />
              <ExpandButton aria-label="Expand formula bar"><DownLarge /></ExpandButton>
            </FormulaBar>
            <SheetArea>
              <SheetView>
                <Grid>
                  <colgroup>
                    <Col $w={39} />
                    {widths.map((w, i) => <Col key={i} $w={w} />)}
                    <Col />
                  </colgroup>
                  <thead>
                    <tr>
                      <Corner />
                      {letters.map(l => <ColHead key={l} scope="col" $on={l === 'A'}>{l}</ColHead>)}
                      <ColHead aria-label="V" scope="col" />
                    </tr>
                    <tr>
                      <RowHead scope="row" $on>1</RowHead>
                      {fields.map((f, i) => <FieldCell key={i} $active={i === 0}>{f}{cut.includes(i) && <CutMarker />}</FieldCell>)}
                    </tr>
                  </thead>
                  <tbody>
                    {records.map((r, i) => (
                      <tr key={i}>
                        <RowHead scope="row">{3132 + i}</RowHead>
                        {r.map((v, k) => <Cell key={k}>{v}</Cell>)}
                      </tr>
                    ))}
                    <tr>
                      <RowHead />
                      {fields.map((_, k) => <Cell key={k} />)}
                    </tr>
                  </tbody>
                </Grid>
              </SheetView>
              <VScroll><Spacer $grow={267} /><VThumb /><Spacer $grow={290} /></VScroll>
            </SheetArea>
            <HScroll><HThumb /><Spacer $grow={753} /><SplitBox /></HScroll>
            <Tabs>
              <TabArrow aria-label="First sheet"><Small d="M0 0h2v3l5-3v8L2 5v3H0z" /></TabArrow>
              <TabArrow aria-label="Previous sheet"><Small d="M7 0v8L1 4z" /></TabArrow>
              <TabArrow aria-label="Next sheet"><Small d="M1 0v8l6-4z" /></TabArrow>
              <TabArrow aria-label="Last sheet"><Small d="M8 0H6v3L1 0v8l5-3v3h2z" /></TabArrow>
              <AddTab aria-label="Add sheet"><Small w={10} d="M3 0h2v3h3v2H5v3H3V5H0V3h3z" fill="#e4e4e4" /></AddTab>
              <Tab>Tabelle1</Tab>
            </Tabs>
          </Work>
          <Divider>
            <Spacer $grow={291} />
            <DividerHandle aria-label="Hide sidebar"><Small d="M1 0v8l6-4z" fill="#222" /></DividerHandle>
            <Spacer $grow={291} />
          </Divider>
          <Sidebar>
            <SideButton aria-label="Sidebar settings"><Svg>{icons.gear}</Svg></SideButton>
            <SideRule />
            <SideButton aria-label="Properties" $on><Svg s={22}>{icons.properties}</Svg></SideButton>
            <SideButton aria-label="Styles"><Svg>{icons.styles}</Svg></SideButton>
            <SideButton aria-label="Gallery"><Svg>{icons.photo}</Svg></SideButton>
            <SideButton aria-label="Navigator"><Svg>{icons.navigator}</Svg></SideButton>
            <SideButton aria-label="Functions"><Svg>{icons.functions}</Svg></SideButton>
          </Sidebar>
        </Middle>
        <FindBar onSubmit={e => e.preventDefault()}>
          <Grip /><Gap $w={6} />
          <ToolButton type="button" aria-label="Close find bar">
            <svg width="22" height="22" viewBox="0 0 22 22"><circle cx="11" cy="11" r="10.500" fill="#d93038" /><path d="M2 9a9.500 9.500 0 0 1 18 0q-9 5-18 0z" fill="#e85058" /><path d="M7.500 7.500l7 7M14.500 7.500l-7 7" stroke="#fff" strokeWidth="2.600" /></svg>
          </ToolButton>
          <Combo $w={250}>
            <ComboInput aria-label="Find" placeholder="Find" />
            <ComboArrow type="button" aria-label="Search history"><DownLarge /></ComboArrow>
          </Combo>
          <ToolButton type="button" aria-label="Find previous"><Svg><path d="M12 20V4M6 10l6-6 6 6" fill="none" stroke="#4e4e4e" strokeWidth="1.500" /></Svg></ToolButton>
          <ToolButton type="button" aria-label="Find next"><Svg><path d="M12 4v16M6 14l6 6 6-6" fill="none" stroke="#4e4e4e" strokeWidth="1.500" /></Svg></ToolButton>
          <FindAll type="button">Find All</FindAll>
          <Check><Box type="checkbox" />Formatted Display</Check>
          <Check><Box type="checkbox" />Match Case</Check>
          <Gap $w={6} />
          <ToolButton type="button" aria-label="Find and Replace"><Svg>{icons.find}</Svg></ToolButton>
        </FindBar>
        <StatusBar>
          <Status $grow={180} $align="flex-start" $indent={11}>Sheet 1 of 1</Status>
          <Status $grow={178} />
          <Status $grow={226} $align="flex-start" $indent={9}>PageStyle_Tabelle1</Status>
          <Status $grow={241}>German (Switzerland)</Status>
          <Status $grow={68} />
          <Status $w={30}>
            <svg width="16" height="12" viewBox="0 0 16 12"><path d="M0 .5h5M2.500 .5v11M0 11.500h5M8.500 8v3h6V8" fill="none" stroke="#999" /></svg>
          </Status>
          <Status $w={30}>
            <svg width="13" height="10" viewBox="0 0 13 10"><path d="M0 0h13v10H0z" fill="#e0e0e0" /><path d="M5 1h3v4h2L6.500 9 3 5h2z" fill="#777" /></svg>
          </Status>
          <Status $w={30} />
          <Status $grow={216}>Average: ; Sum: 0</Status>
          <Status $w={144}>
            <ZoomButton aria-label="Zoom out"><Small w={9} d="M0 3.500h8v1H0z" fill="#999" /></ZoomButton>
            <ZoomSlider type="range" aria-label="Zoom" min={0} max={100} defaultValue={58} />
            <ZoomButton aria-label="Zoom in"><Small w={9} d="M3.500 0h1v3.500H8v1H4.500V8h-1V4.500H0v-1h3.500z" fill="#999" /></ZoomButton>
          </Status>
          <Status $w={49}>148%</Status>
        </StatusBar>
      </Body>
    </Window>
  );
}
